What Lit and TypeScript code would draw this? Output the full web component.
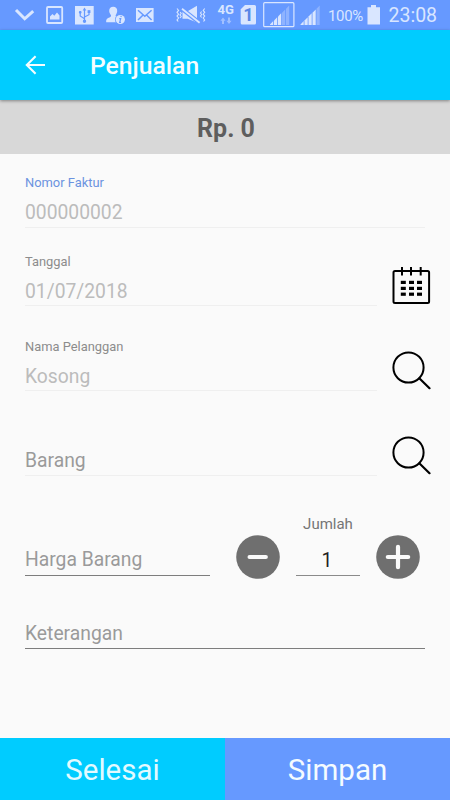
import { LitElement, html, css, svg, nothing } from "lit";
import { customElement, property } from "lit/decorators.js";

const signal = (x: number, lit: number) =>
  [0, 1, 2, 3, 4].map((i) => {
    const left = x + i * 4;
    const top = 25 - (i + 1) * 3.9;
    return svg`<path d="M${left} 25V${top + 3.3}L${left + 3.2} ${top}V25Z" fill-opacity=${i < lit ? 1 : 0.35}/>`;
  });

@customElement("status-bar")
export class StatusBar extends LitElement {
  static styles = css`
    :host {
      display: flex;
      height: 30px;
      background: #6699ff;
      color: #d9e6ff;
      font-family: Roboto, sans-serif;
      overflow: hidden;
    }
    svg {
      display: block;
      flex: none;
      height: 30px;
      fill: #d9e6ff;
      overflow: visible;
    }
    .chevron { width: 19px; margin-left: 15px; }
    .image { width: 18px; margin-left: 12px; }
    .usb { width: 19px; margin-left: 11px; }
    .person { width: 20px; margin-left: 12px; }
    .mail { width: 18px; margin-left: 10px; }
    .mute { width: 30px; margin-left: 22px; }
    .network { width: 17px; margin-left: 11px; }
    .sim { width: 16px; margin-left: 6px; }
    .boxed { width: 32px; margin-left: 7px; }
    .signal { width: 20px; margin-left: 5px; }
    .level {
      width: 36px;
      margin-left: 8px;
      font-size: 15px;
      line-height: 32px;
      letter-spacing: -0.35px;
      white-space: nowrap;
    }
    .battery { width: 13px; margin-left: 3px; }
    .time {
      margin-left: 8.5px;
      font-size: 19.5px;
      line-height: 32px;
      white-space: nowrap;
    }
    .small { font: 700 12px Roboto, sans-serif; }
    .digit { font: 700 18px Roboto, sans-serif; fill: #5a86e6; }
  `;

  render() {
    return html`
      <svg class="chevron" viewBox="15 0 19 30">
        <path d="M16 10L24.7 18.8L33.2 11.2" fill="none" stroke="#d9e6ff" stroke-width="3" />
      </svg>
      <svg class="image" viewBox="46 0 18 30">
        <rect x="47" y="7" width="15.2" height="16" rx="1" fill="none" stroke="#d9e6ff" stroke-width="1.8" />
        <path d="M50 19.5V16.5L52.5 14L54.3 15.8L57 12.5L59.5 15.5V19.5Z" />
      </svg>
      <svg class="usb" viewBox="75 0 19 30">
        <rect x="75" y="6" width="18.7" height="18.5" />
        <g fill="#6699ff" stroke="#6699ff" stroke-width="1.2">
          <path d="M84.5 7.4L86.3 10.4H82.7Z" stroke="none" />
          <path d="M84.5 10V21M84.5 18.7L80.2 16V12.5M84.5 17L89 14.7V12" fill="none" />
          <circle cx="84.5" cy="21.3" r="1.1" />
          <circle cx="80.2" cy="12.3" r="0.8" />
          <rect x="88.2" y="10.8" width="1.6" height="1.6" />
        </g>
      </svg>
      <svg class="person" viewBox="106 0 20 30">
        <path d="M113.2 6.8C115.8 6.8 117.5 8.6 117.2 11.2C117 13.2 116 14.5 115.6 15.4C115.6 17 118 17.6 117 22.2H106.2C106 18.5 107.5 18.3 109.5 17.4C111.4 16.6 111.2 15.8 110.8 15C109.6 13.4 109.2 12.4 109.2 10.8C109.2 8.4 110.8 6.8 113.2 6.8Z" />
        <circle cx="120.3" cy="19.5" r="5.3" fill="#6699ff" />
        <circle cx="120.3" cy="19.5" r="4.6" />
        <path d="M121.2 15.8L120.9 17M119.3 18.6H120.7L119.7 22.3H121" fill="none" stroke="#6699ff" stroke-width="1.2" />
      </svg>
      <svg class="mail" viewBox="136 0 18 30">
        <rect x="136" y="8" width="17.6" height="14" />
        <path d="M138 10.2L144.8 16.2L151.6 10.2M138 20L142.8 15.2M151.6 20L146.8 15.2" fill="none" stroke="#6699ff" stroke-width="1.5" />
      </svg>
      <svg class="mute" viewBox="176 0 30 30">
        <path d="M182.5 11.2H187.6L197 5.8V22.6L187.6 18.8H182.5Z" />
        <path d="M182 8.8L199.6 22.8" stroke="#6699ff" stroke-width="4.2" />
        <path d="M182 8.8L199.6 22.8" stroke="#d9e6ff" stroke-width="1.8" />
        <path d="M177 8.5L178.6 10.4L177 12.3L178.6 14.2L177 16.1L178.6 18L177 19.9L178.2 21.5M180.2 12L181.2 13.5L180 15L181.2 16.5L180 18M204.7 8.5L203.2 10.4L204.7 12.3L203.2 14.2L204.7 16.1L203.2 18L204.7 19.9L203.5 21.5M201.6 11.5L200.5 13L201.6 14.5L200.5 16L201.6 17.5" fill="none" stroke="#d9e6ff" stroke-width="1.1" />
      </svg>
      <svg class="network" viewBox="217 0 17 30">
        <text class="small" x="217.6" y="13.6" textLength="16.4" lengthAdjust="spacingAndGlyphs">4G</text>
        <g fill-opacity="0.5">
          <path d="M222 24H224V20.7H225.6L223 17.5L220.4 20.7H222Z" />
          <path d="M228 17.5H230V20.8H231.6L229 24L226.4 20.8H228Z" />
        </g>
      </svg>
      <svg class="sim" viewBox="240 0 16 30">
        <path d="M241 9L245 5H254.5Q256 5 256 6.5V23Q256 24.5 254.5 24.5H242.2Q240.7 24.5 240.7 23V9Z" />
        <text class="digit" x="248.3" y="21.3" text-anchor="middle">1</text>
      </svg>
      <svg class="boxed" viewBox="263 0 32 30">
        <rect x="263.7" y="2.7" width="30.2" height="24" rx="1" fill="none" stroke="#d9e6ff" stroke-width="1.2" />
        ${signal(270, 3)}
      </svg>
      <svg class="signal" viewBox="300 0 20 30">${signal(300.5, 4)}</svg>
      <span class="level">100%</span>
      <svg class="battery" viewBox="367 0 13 30">
        <path d="M371 5H376V7.2H380V24.5H367.5V7.2H371Z" />
      </svg>
      <span class="time">23:08</span>
    `;
  }
}

@customElement("form-field")
export class FormField extends LitElement {
  @property() label = "";
  @property() value = "";
  @property() hint = "";
  @property({ type: Boolean, reflect: true }) focused = false;
  @property({ type: Boolean, reflect: true }) editable = false;

  static styles = css`
    :host {
      display: flex;
      flex-direction: column;
      justify-content: flex-end;
      box-sizing: border-box;
      border-bottom: 1px solid #efefef;
      font-family: Roboto, sans-serif;
    }
    :host([editable]) { border-bottom-color: #7d7d7d; }
    .label {
      font-size: 12.9px;
      line-height: 16px;
      color: #8c8c8c;
      margin-bottom: 10px;
    }
    :host([focused]) .label { color: #6b93e0; }
    .value, .hint {
      font-size: 19.3px;
      line-height: 24px;
      padding-bottom: 2px;
      color: #bcbcbc;
    }
    .value { padding-bottom: 1px; }
    :host([focused]) .value { padding-bottom: 2px; }
    .hint { color: #9a9a9a; }
  `;

  render() {
    return html`
      ${this.label ? html`<div class="label">${this.label}</div>` : nothing}
      ${this.value
        ? html`<div class="value">${this.value}</div>`
        : html`<div class="hint">${this.hint}</div>`}
    `;
  }
}

@customElement("app-root")
export class AppRoot extends LitElement {
  static styles = css`
    :host {
      display: flex;
      flex-direction: column;
      width: 450px;
      height: 800px;
      background: #fafafa;
      font-family: Roboto, sans-serif;
      overflow: hidden;
    }
    svg { display: block; flex: none; }
    .appbar {
      display: flex;
      align-items: center;
      height: 70px;
      box-sizing: border-box;
      padding-left: 25px;
      background: #00ccff;
      color: #f4fdff;
      box-shadow: 0 1px 3px rgba(0, 0, 0, 0.4);
      z-index: 1;
    }
    .title {
      margin: 2px 0 0 44px;
      font-size: 24.7px;
      line-height: 32px;
      font-weight: 500;
    }
    .total {
      height: 54px;
      line-height: 57px;
      background: #d8d8d8;
      color: #5e5e5e;
      font-size: 25px;
      font-weight: 700;
      text-align: center;
      padding-left: 2px;
    }
    .form { flex: 1; padding: 0 25px; }
    .row { display: flex; align-items: flex-end; }
    .row form-field { flex: none; width: 352px; }
    .invoice { height: 74px; }
    .date { height: 78px; }
    .date svg { margin: 0 0 1px 15px; }
    .lookup { height: 85px; }
    .lookup svg { margin: 0 0 1px 15px; }
    .amount { height: 100px; }
    .row .price { width: 185px; padding-bottom: 1px; }
    .round { margin: 0 0 -2.5px 25.5px; }
    .plus { margin-left: 16px; }
    .quantity {
      width: 64px;
      margin-left: 16.5px;
      box-sizing: border-box;
      border-bottom: 1px solid #8a8a8a;
      text-align: center;
    }
    .caption {
      font-size: 15px;
      line-height: 20px;
      color: #757575;
      margin-bottom: 15px;
    }
    .count {
      font-size: 19.3px;
      line-height: 24px;
      color: #1f1f1f;
      padding: 0 2px 2px 0;
    }
    .note { height: 73px; }
    .actions {
      display: flex;
      height: 62px;
      color: #f4fbff;
      font-size: 29.5px;
      line-height: 65px;
      text-align: center;
    }
    .finish { flex: 1; background: #00ccff; color: #e2faff; }
    .save { flex: 1; background: #6699ff; }
  `;

  private searchIcon = () => html`
    <svg width="39" height="39" viewBox="0 0 39 39" fill="none" stroke="#000">
      <circle cx="16.5" cy="16.5" r="15.1" stroke-width="2" />
      <path d="M27.3 27.3L37.5 37.2" stroke-width="2.2" stroke-linecap="round" />
    </svg>
  `;

  render() {
    return html`
      <status-bar></status-bar>
      <header class="appbar">
        <svg width="21" height="20" viewBox="0 0 21 20" fill="none" stroke="#f4fdff" stroke-width="2.1">
          <path d="M20 10H2.2M10.6 1.2L1.8 10L10.6 18.8" />
        </svg>
        <div class="title">Penjualan</div>
      </header>
      <div class="total">Rp. 0</div>
      <main class="form">
        <form-field class="invoice" label="Nomor Faktur" value="000000002" focused></form-field>
        <div class="row date">
          <form-field label="Tanggal" value="01/07/2018"></form-field>
          <svg width="39" height="39" viewBox="0 0 39 39">
            <rect x="1.5" y="5" width="35.6" height="32" rx="1.5" fill="none" stroke="#000" stroke-width="2" />
            <path d="M10 1V9.5M19 1V9.5M28.7 1V9.5" fill="none" stroke="#000" stroke-width="2" />
            ${[15, 21, 26.8].map((y) =>
              [8.8, 17, 25].map((x) => svg`<rect x=${x} y=${y - 0.2} width="5" height="3.2"/>`)
            )}
          </svg>
        </div>
        <div class="row lookup">
          <form-field label="Nama Pelanggan" value="Kosong"></form-field>
          ${this.searchIcon()}
        </div>
        <div class="row lookup">
          <form-field hint="Barang"></form-field>
          ${this.searchIcon()}
        </div>
        <div class="row amount">
          <form-field class="price" hint="Harga Barang" editable></form-field>
          <svg class="round" width="44" height="44" viewBox="0 0 44 44">
            <circle cx="22" cy="22" r="21.8" fill="#6f6f6f" />
            <path d="M13.6 22H29.8" stroke="#fafafa" stroke-width="4.2" stroke-linecap="round" />
          </svg>
          <div class="quantity">
            <div class="caption">Jumlah</div>
            <div class="count">1</div>
          </div>
          <svg class="round plus" width="44" height="44" viewBox="0 0 44 44">
            <circle cx="22" cy="22" r="21.8" fill="#6f6f6f" />
            <path d="M11.8 22H32.2M22 11.8V32.2" stroke="#fafafa" stroke-width="4.2" stroke-linecap="round" />
          </svg>
        </div>
        <form-field class="note" hint="Keterangan" editable></form-field>
      </main>
      <footer class="actions">
        <div class="finish">Selesai</div>
        <div class="save">Simpan</div>
      </footer>
    `;
  }
}
